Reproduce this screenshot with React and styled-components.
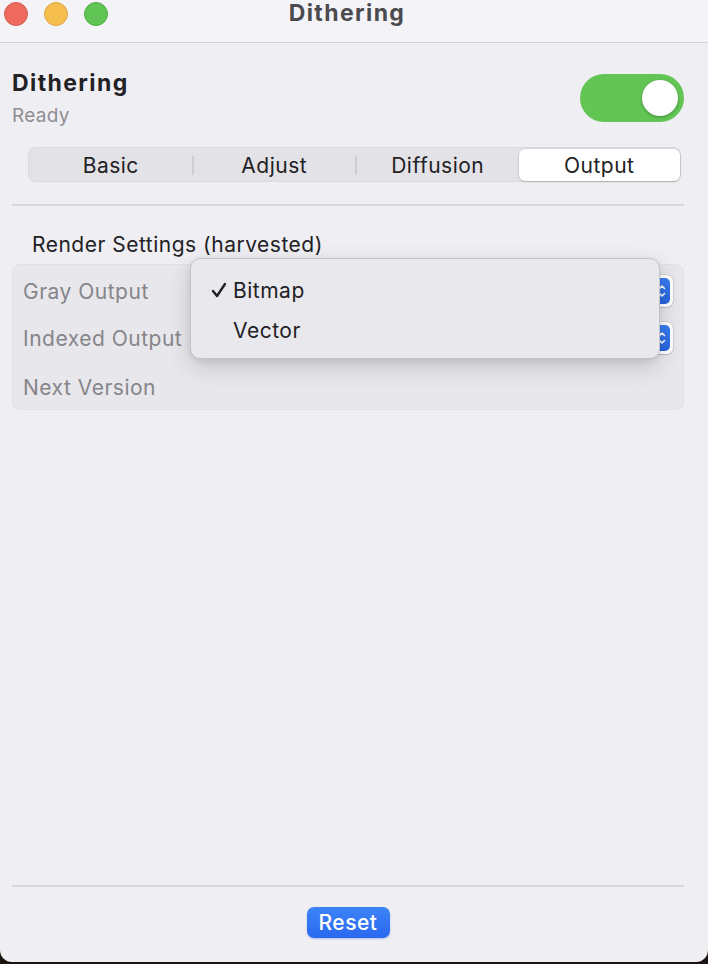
import React from "react";
import styled, { createGlobalStyle } from "styled-components";

const GlobalStyle = createGlobalStyle`
    html, body {
        margin: 0;
        padding: 0;
        height: 100%;
    }
    body {
        background: #1b1310;
        font-family: Inter, "Noto Sans", "Liberation Sans", sans-serif;
        -webkit-font-smoothing: antialiased;
    }
`;

const Window = styled.div`
    width: 708px;
    height: 962px;
    background: #efeef3;
    border-radius: 0 0 12px 12px;
    overflow: hidden;
    display: flex;
    flex-direction: column;
    box-sizing: border-box;
`;

const TitleBar = styled.div`
    height: 43px;
    box-sizing: border-box;
    padding: 2px 0 0 4px;
    background: #f4f3f8;
    border-bottom: 1px solid #d2d1d6;
    display: grid;
    grid-template-columns: 1fr auto 1fr;
    align-items: start;
`;

const Lights = styled.div`
    display: flex;
    gap: 16px;
`;

const Light = styled.span`
    width: 24px;
    height: 24px;
    border-radius: 50%;
    box-sizing: border-box;
    background: ${(p) => p.color};
    border: 1px solid ${(p) => p.edge};
`;

const WindowTitle = styled.div`
    font-size: 23px;
    line-height: 24px;
    font-weight: 700;
    letter-spacing: 1.4px;
    color: #4b4a4f;
    margin: -1px 18px 0 0;
`;

const Body = styled.div`
    flex: 1;
    display: flex;
    flex-direction: column;
    padding: 0 24px 0 12px;
`;

const Header = styled.div`
    display: flex;
    justify-content: space-between;
    align-items: center;
    padding-top: 26px;
`;

const AppName = styled.div`
    font-size: 23px;
    line-height: 28px;
    font-weight: 700;
    letter-spacing: 1.4px;
    color: #222124;
`;

const Status = styled.div`
    font-size: 19px;
    line-height: 22px;
    letter-spacing: 0.3px;
    color: #8e8d92;
    margin-top: 8px;
`;

const Switch = styled.div`
    width: 104px;
    height: 48px;
    box-sizing: border-box;
    border-radius: 24px;
    padding: 6px;
    background: #62c554;
    display: flex;
    justify-content: ${(p) => (p.on ? "flex-end" : "flex-start")};
`;

const Knob = styled.span`
    width: 36px;
    height: 36px;
    border-radius: 50%;
    background: #fff;
    box-shadow: 0 1px 3px rgba(0, 0, 0, 0.3);
`;

const Segmented = styled.div`
    margin: 20px 3px 0 16px;
    height: 35px;
    box-sizing: border-box;
    padding: 2px 1px 1px 2px;
    border-radius: 8px;
    background: #e3e2e7;
    box-shadow: inset 0 0 0 1px rgba(0, 0, 0, 0.04);
    display: flex;
    align-items: stretch;
`;

const Segment = styled.div`
    flex: 1;
    display: flex;
    align-items: center;
    justify-content: center;
    font-size: 21px;
    letter-spacing: 0.5px;
    color: #222124;
    border-radius: 6px;
    background: ${(p) => (p.active ? "#ffffff" : "transparent")};
    box-shadow: ${(p) =>
        p.active ? "0 1px 2px rgba(0,0,0,0.18), 0 0 0 0.5px rgba(0,0,0,0.08)" : "none"};
`;

const SegDivider = styled.span`
    width: 2px;
    height: 19px;
    align-self: center;
    background: ${(p) => (p.hidden ? "transparent" : "#cfced3")};
`;

const Rule = styled.div`
    height: 2px;
    align-self: stretch;
    background: #d7d6db;
    margin-top: ${(p) => p.top}px;
`;

const Section = styled.div`
    position: relative;
    margin-top: 27px;
`;

const SectionTitle = styled.div`
    font-size: 21px;
    line-height: 24px;
    letter-spacing: 0.5px;
    color: #222124;
    padding-left: 20px;
`;

const Group = styled.div`
    margin-top: 7px;
    height: 146px;
    box-sizing: border-box;
    padding: 10px 10px 6px 10px;
    border-radius: 8px;
    background: #e8e7ec;
    border: 1px solid #e1e0e5;
    display: flex;
    flex-direction: column;
    gap: 15px;
`;

const Row = styled.div`
    height: 32px;
    display: flex;
    align-items: center;
    justify-content: space-between;
    margin-top: ${(p) => p.extra || 0}px;
`;

const Label = styled.span`
    font-size: 21px;
    letter-spacing: 0.5px;
    color: #86858a;
`;

const PopupButton = styled.div`
    width: 470px;
    height: 32px;
    box-sizing: border-box;
    border-radius: 6px;
    background: #fff;
    box-shadow: 0 0 0 0.5px rgba(0, 0, 0, 0.18), 0 1px 1px rgba(0, 0, 0, 0.12);
    display: flex;
    align-items: center;
    justify-content: flex-end;
    padding: 0 3px;
`;

const Stepper = styled.span`
    width: 16px;
    height: 26px;
    border-radius: 5px;
    background: linear-gradient(#3a7ef3, #2864dc);
    display: flex;
    align-items: center;
    justify-content: center;
`;

const Menu = styled.div`
    position: absolute;
    left: 178px;
    top: 25px;
    width: 470px;
    height: 101px;
    box-sizing: border-box;
    padding-top: 11px;
    border-radius: 10px;
    background: #e9e8ed;
    border: 1px solid #c4c3c8;
    box-shadow: 0 8px 24px rgba(0, 0, 0, 0.16), 0 2px 6px rgba(0, 0, 0, 0.08);
`;

const MenuItem = styled.div`
    height: 40px;
    display: flex;
    align-items: center;
    font-size: 21px;
    letter-spacing: 0.5px;
    color: #222124;
`;

const Check = styled.span`
    width: 42px;
    box-sizing: border-box;
    padding-left: 20px;
    display: flex;
    align-items: center;
`;

const Spacer = styled.div`
    flex: 1;
`;

const Footer = styled.div`
    display: flex;
    flex-direction: column;
    align-items: center;
    padding-bottom: 24px;
`;

const ResetButton = styled.button`
    margin-top: 20px;
    width: 83px;
    height: 31px;
    border: none;
    border-radius: 7px;
    background: linear-gradient(#3d84f8, #2a69f0);
    box-shadow: 0 1px 2px rgba(0, 60, 200, 0.25);
    color: #fff;
    font-family: inherit;
    font-size: 21px;
    font-weight: 500;
    letter-spacing: 0.5px;
    padding: 0;
`;

const StepperIcon = () => (
    <svg width="10" height="18" viewBox="0 0 10 18" fill="none">
        <path d="M2.5 6.5 L5 4 L7.5 6.5" stroke="#fff" strokeWidth="1.6" strokeLinecap="round" strokeLinejoin="round" />
        <path d="M2.5 11.5 L5 14 L7.5 11.5" stroke="#fff" strokeWidth="1.6" strokeLinecap="round" strokeLinejoin="round" />
    </svg>
);

const CheckIcon = () => (
    <svg width="16" height="18" viewBox="0 0 16 18" fill="none">
        <path d="M2 10 L6 15 L14 3" stroke="#222124" strokeWidth="2.4" strokeLinecap="round" strokeLinejoin="round" />
    </svg>
);

const tabs = ["Basic", "Adjust", "Diffusion", "Output"];
const activeTab = "Output";

const rows = ["Gray Output", "Indexed Output"];

const App = () => {
    const activeIndex = tabs.indexOf(activeTab);

    return (
        <>
            <GlobalStyle />
            <Window>
                <TitleBar>
                    <Lights>
                        <Light color="#ee6a5f" edge="#d85a4f" />
                        <Light color="#f5be4f" edge="#dca63c" />
                        <Light color="#61c555" edge="#4fae44" />
                    </Lights>
                    <WindowTitle>Dithering</WindowTitle>
                    <span />
                </TitleBar>
                <Body>
                    <Header>
                        <div>
                            <AppName>Dithering</AppName>
                            <Status>Ready</Status>
                        </div>
                        <Switch on>
                            <Knob />
                        </Switch>
                    </Header>

                    <Segmented>
                        {tabs.map((tab, i) => (
                            <React.Fragment key={tab}>
                                {i > 0 && (
                                    <SegDivider
                                        hidden={i === activeIndex || i - 1 === activeIndex}
                                    />
                                )}
                                <Segment active={tab === activeTab}>{tab}</Segment>
                            </React.Fragment>
                        ))}
                    </Segmented>

                    <Rule top={22} />

                    <Section>
                        <SectionTitle>Render Settings (harvested)</SectionTitle>
                        <Group>
                            {rows.map((label) => (
                                <Row key={label}>
                                    <Label>{label}</Label>
                                    <PopupButton>
                                        <Stepper>
                                            <StepperIcon />
                                        </Stepper>
                                    </PopupButton>
                                </Row>
                            ))}
                            <Row extra={3}>
                                <Label>Next Version</Label>
                            </Row>
                        </Group>
                        <Menu>
                            <MenuItem>
                                <Check>
                                    <CheckIcon />
                                </Check>
                                Bitmap
                            </MenuItem>
                            <MenuItem>
                                <Check />
                                Vector
                            </MenuItem>
                        </Menu>
                    </Section>

                    <Spacer />

                    <Footer>
                        <Rule top={0} />
                        <ResetButton type="button">Reset</ResetButton>
                    </Footer>
                </Body>
            </Window>
        </>
    );
};

export default App;
